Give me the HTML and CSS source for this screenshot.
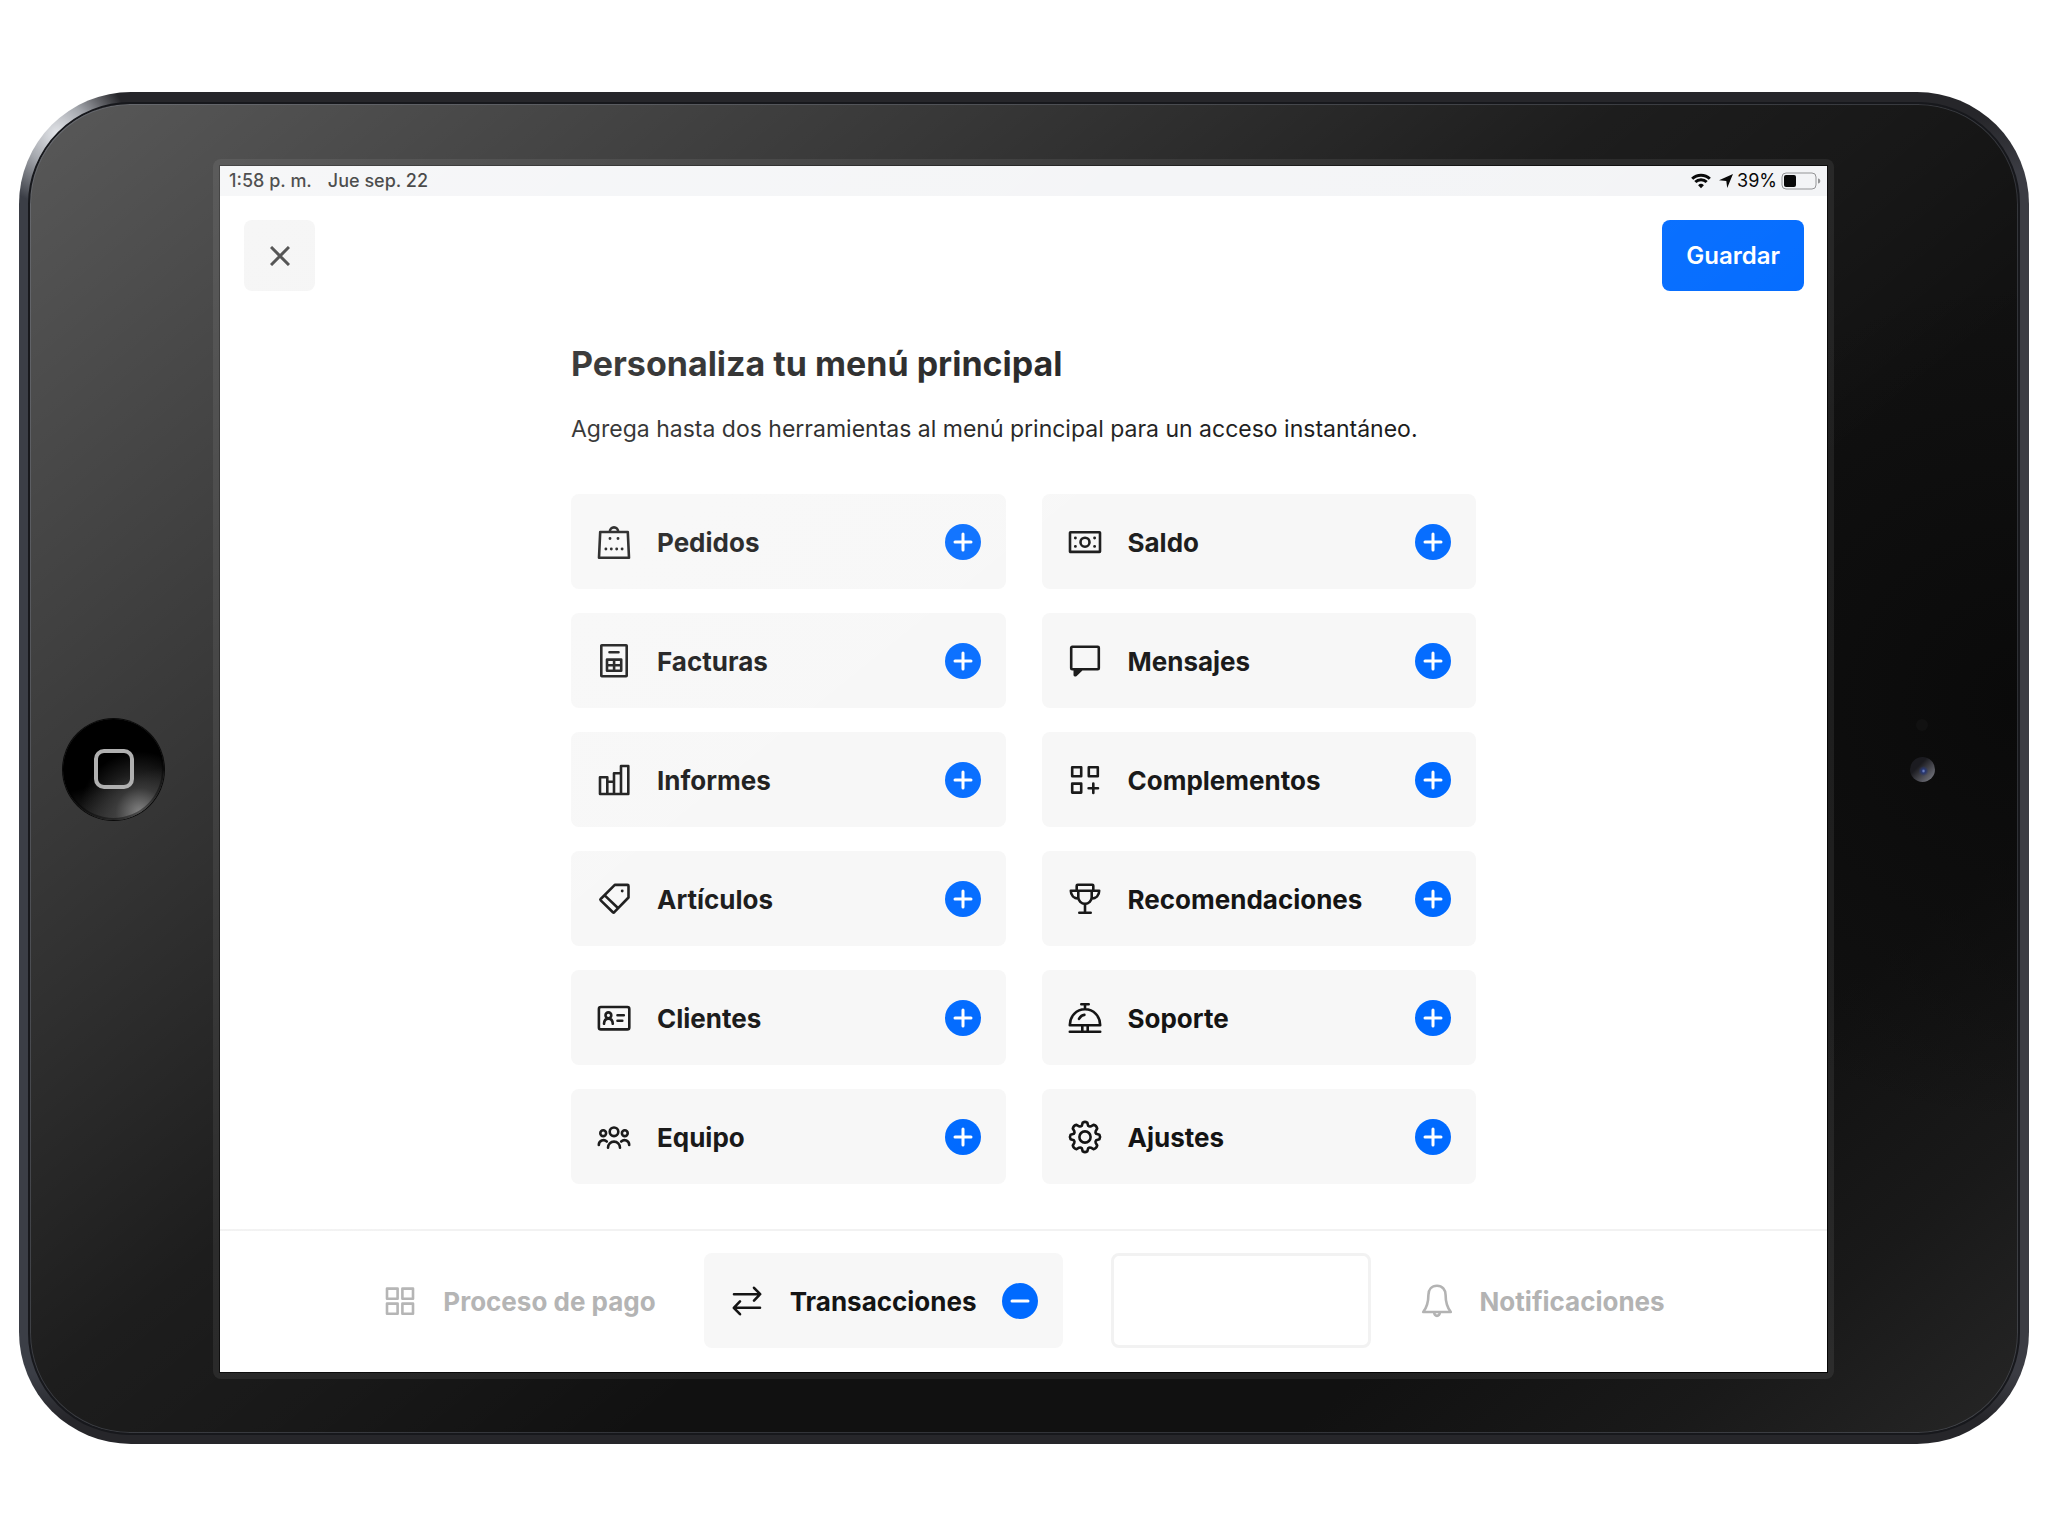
FILE: index.html
```html
<!DOCTYPE html>
<html lang="es">
<head>
<meta charset="utf-8">
<meta name="viewport" content="width=device-width, initial-scale=1">
<title>Personaliza tu menú principal</title>
<link rel="stylesheet" href="styles.css">
</head>
<body>
<svg class="sprite" aria-hidden="true">
  <symbol id="plus" viewBox="0 0 36 36"><path d="M18 10v16M10 18h16"/></symbol>
</svg>
<div class="device">
  <div class="glass">
    <div class="bezel bezel-home">
      <button class="home" type="button" aria-label="Inicio"><span class="home-mark"></span></button>
    </div>
    <div class="frame">
      <div class="screen">
        <div class="status">
          <div class="status-side status-time"><span>1:58 p. m.</span><span>Jue sep. 22</span></div>
          <div class="status-side status-power">
            <svg class="wifi" viewBox="0 0 20 16" aria-hidden="true"><path d="M1.200 5.800a12.500 12.500 0 0 1 17.600 0M4.300 9a8.100 8.100 0 0 1 11.400 0" /><path class="solid" d="M10 15.200l-2.900-2.900a4.100 4.100 0 0 1 5.800 0z"/></svg>
            <svg class="arrow" viewBox="0 0 14 14" aria-hidden="true"><path d="M14 0L8.200 14 7.300 7.100 0 6.200z"/></svg>
            <span>39%</span>
            <svg class="battery" viewBox="0 0 40 18" aria-hidden="true"><rect class="shell" x="1" y="1" width="34" height="16" rx="4"/><rect x="3" y="3" width="12" height="12" rx="2"/><path class="nub" d="M37 6.500c3 0 3 5 0 5z"/></svg>
          </div>
        </div>
        <header class="toolbar">
          <button class="close" type="button" aria-label="Cerrar"><svg viewBox="0 0 20 20" aria-hidden="true"><path d="M1 1l18 18M19 1L1 19"/></svg></button>
          <button class="save" type="button">Guardar</button>
        </header>
        <main class="content">
          <h1>Personaliza tu menú principal</h1>
          <p>Agrega hasta dos herramientas al menú principal para un acceso instantáneo.</p>
          <ul class="tools">
            <li class="tool">
              <svg class="icon" viewBox="0 0 36 36" aria-hidden="true"><path d="M4.200 8h27.600L33 33.800H3zM13.800 8a4.200 4.600 0 0 1 8.400 0"/><path class="dots" d="M14 14.500h0M22 14.500h0M9.900 25h0M15.300 25h0M20.700 25h0M26.100 25h0"/></svg>
              <span class="label">Pedidos</span>
              <button class="round" type="button" aria-label="Agregar Pedidos"><svg><use href="#plus"/></svg></button>
            </li>
            <li class="tool">
              <svg class="icon" viewBox="0 0 36 36" aria-hidden="true"><rect x="3" y="8.300" width="30" height="19.600" rx=".5"/><circle cx="18" cy="18.200" r="4.500"/><path class="dots" d="M8.400 14h0M8.400 22.400h0M27.600 14h0M27.600 22.400h0"/></svg>
              <span class="label">Saldo</span>
              <button class="round" type="button" aria-label="Agregar Saldo"><svg><use href="#plus"/></svg></button>
            </li>
            <li class="tool">
              <svg class="icon" viewBox="0 0 36 36" aria-hidden="true"><rect x="5.300" y="2.300" width="25.400" height="31" rx=".5"/><path d="M13.500 9.200h9M11 16.600h14.200v11.200H11zM11 22.200h14M18.100 16.600v11.200"/></svg>
              <span class="label">Facturas</span>
              <button class="round" type="button" aria-label="Agregar Facturas"><svg><use href="#plus"/></svg></button>
            </li>
            <li class="tool">
              <svg class="icon" viewBox="0 0 36 36" aria-hidden="true"><rect x="4.200" y="3.800" width="27.600" height="22.400" rx="1"/><path class="solid" d="M7.800 27v5.100h1L14 27z"/></svg>
              <span class="label">Mensajes</span>
              <button class="round" type="button" aria-label="Agregar Mensajes"><svg><use href="#plus"/></svg></button>
            </li>
            <li class="tool">
              <svg class="icon" viewBox="0 0 36 36" aria-hidden="true"><path d="M4 32V15.300h7.300V32M11.300 19.800H18M18 32V11.300h7M25 32V4h7.300v28H4"/></svg>
              <span class="label">Informes</span>
              <button class="round" type="button" aria-label="Agregar Informes"><svg><use href="#plus"/></svg></button>
            </li>
            <li class="tool">
              <svg class="icon" viewBox="0 0 36 36" aria-hidden="true"><path d="M5.200 5.300h9v9h-9zM21.800 5.300h9v9h-9zM5.200 21.600h9v9h-9zM26.300 21.600v9.400M21.600 26.300H31"/></svg>
              <span class="label">Complementos</span>
              <button class="round" type="button" aria-label="Agregar Complementos"><svg><use href="#plus"/></svg></button>
            </li>
            <li class="tool">
              <svg class="icon" viewBox="0 0 36 36" aria-hidden="true"><path d="M18.800 3.900H31.500a1 1 0 0 1 1 1V16.500L18.300 31.200a1 1 0 0 1-1.400 0L4.700 19.400a1 1 0 0 1 0-1.400zM8.700 14.400L22.200 27.300"/><path class="dots" d="M26.200 10h0"/></svg>
              <span class="label">Artículos</span>
              <button class="round" type="button" aria-label="Agregar Artículos"><svg><use href="#plus"/></svg></button>
            </li>
            <li class="tool">
              <svg class="icon" viewBox="0 0 36 36" aria-hidden="true"><path d="M9.700 9.800V4.800a1 1 0 0 1 1-1h14.600a1 1 0 0 1 1 1v5M3.800 9.800h28.400M11.300 9.800v6.400a6.700 6.700 0 0 0 13.400 0V9.800M3.800 9.800c0 4.500 3 7.600 7.800 8M32.200 9.800c0 4.500-3 7.600-7.800 8M18 22.900v8.800M12.300 31.800h11.400"/></svg>
              <span class="label">Recomendaciones</span>
              <button class="round" type="button" aria-label="Agregar Recomendaciones"><svg><use href="#plus"/></svg></button>
            </li>
            <li class="tool">
              <svg class="icon" viewBox="0 0 36 36" aria-hidden="true"><rect x="2.900" y="7" width="30.400" height="22.400" rx="2"/><circle cx="12.400" cy="15.300" r="2.900"/><path d="M8 23.800c.2-3.300 2-5.200 4.400-5.200s4.200 1.900 4.400 5.200M21.500 15.200h6.300M21.500 20.800h4.800"/></svg>
              <span class="label">Clientes</span>
              <button class="round" type="button" aria-label="Agregar Clientes"><svg><use href="#plus"/></svg></button>
            </li>
            <li class="tool">
              <svg class="icon" viewBox="0 0 36 36" aria-hidden="true"><path d="M14.300 4.300h7.400M18 4.300v5M2.800 25.200c0-9.200 6.700-15.900 15.200-15.900s15.200 6.700 15.200 15.900zM2.800 31.800h30.400M15.300 25.200v6.600M20.700 25.200v6.600M12 18.800c1.300-2.300 3.200-3.600 5.400-3.900"/></svg>
              <span class="label">Soporte</span>
              <button class="round" type="button" aria-label="Agregar Soporte"><svg><use href="#plus"/></svg></button>
            </li>
            <li class="tool">
              <svg class="icon" viewBox="0 0 36 36" aria-hidden="true"><circle cx="18" cy="12.800" r="4.300"/><circle cx="7.200" cy="14.200" r="2.900"/><circle cx="28.800" cy="14.200" r="2.900"/><path d="M12 28.800a6 6.200 0 0 1 12 0M2.800 26c0-4.500 5-6.200 8-3.500M33.200 26c0-4.500-5-6.200-8-3.500"/></svg>
              <span class="label">Equipo</span>
              <button class="round" type="button" aria-label="Agregar Equipo"><svg><use href="#plus"/></svg></button>
            </li>
            <li class="tool">
              <svg class="icon" viewBox="0 0 36 36" aria-hidden="true"><circle cx="18" cy="18" r="5.600"/><path d="M15.700 3.600Q18 2.200 20.300 3.600L21.200 6.800Q22.400 7.900 23.900 7.300L26.500 5.800Q29.500 6.500 30.200 9.500L28.700 12.100Q28.100 13.600 29.200 14.800L32.400 15.700Q33.800 18 32.400 20.300L29.200 21.200Q28.100 22.400 28.700 23.900L30.200 26.500Q29.500 29.500 26.500 30.200L23.900 28.700Q22.400 28.100 21.200 29.200L20.300 32.400Q18 33.800 15.700 32.400L14.800 29.200Q13.600 28.100 12.100 28.700L9.500 30.200Q6.500 29.500 5.800 26.500L7.300 23.900Q7.900 22.400 6.800 21.200L3.600 20.300Q2.200 18 3.600 15.700L6.800 14.800Q7.900 13.600 7.300 12.100L5.800 9.500Q6.500 6.500 9.500 5.800L12.100 7.300Q13.600 7.900 14.800 6.800z"/></svg>
              <span class="label">Ajustes</span>
              <button class="round" type="button" aria-label="Agregar Ajustes"><svg><use href="#plus"/></svg></button>
            </li>
          </ul>
        </main>
        <footer class="dock">
          <div class="dock-item">
            <svg class="icon" viewBox="0 0 36 36" aria-hidden="true"><path d="M5 5.600h10.600v10.200H5zM20.400 5.600H31v10.200H20.400zM5 20.600h10.600v10.200H5zM20.400 20.600H31v10.200H20.400z"/></svg>
            <span class="label">Proceso de pago</span>
          </div>
          <div class="dock-item dock-chosen">
            <svg class="icon" viewBox="0 0 36 36" aria-hidden="true"><path d="M5 11.200h26M25 4.800l6.200 6.400-6.200 6.400M31 24.800H5M11 18.400l-6.200 6.400 6.200 6.400"/></svg>
            <span class="label">Transacciones</span>
            <button class="round" type="button" aria-label="Quitar Transacciones"><svg viewBox="0 0 36 36"><path d="M10 18h16"/></svg></button>
          </div>
          <div class="dock-slot"></div>
          <div class="dock-item">
            <svg class="icon" viewBox="0 0 36 36" aria-hidden="true"><path d="M18 2.800c-5.300 0-8.600 3.800-8.600 9.200 0 7.500-1.400 12.200-5.200 17h27.600c-3.800-4.800-5.200-9.500-5.200-17 0-5.400-3.300-9.200-8.600-9.200zM15.200 29.500a2.800 3.400 0 0 0 5.600 0"/></svg>
            <span class="label">Notificaciones</span>
          </div>
        </footer>
      </div>
    </div>
    <div class="bezel bezel-camera">
      <span class="sensor"></span>
      <span class="camera"></span>
    </div>
  </div>
</div>
</body>
</html>
```
FILE: styles.css
```css
*, *::before, *::after { box-sizing: border-box; }

body {
  margin: 0;
  padding: 92px 19px;
  background: #fff;
  color: #141414;
  font-family: Inter, "Liberation Sans", sans-serif;
}

button {
  border: 0;
  padding: 0;
  font: inherit;
  cursor: pointer;
}

.sprite { display: none; }

/* Tablet shell */
.device {
  padding: 12px 11px 11px;
  border-radius: 112px;
  background:
    radial-gradient(circle at 38px 42px, #e4e6ea 0, #a5a8ae 32px, rgba(60, 62, 70, 0) 72px),
    linear-gradient(to bottom, #26262a 0, #26262a 24px, rgba(38, 38, 42, 0) 80px, rgba(38, 38, 42, 0) calc(100% - 70px), #26262a calc(100% - 24px)),
    linear-gradient(to right, #3b3e46, #3b3c43);
}

.glass {
  position: relative;
  display: grid;
  grid-template-columns: 183px 1fr 184px;
  padding: 55px 0 54px;
  border-radius: 100px;
  overflow: hidden;
  background:
    radial-gradient(circle at 100% 45%, #0a0a0a 0, rgba(10, 10, 10, 0) 420px),
    linear-gradient(141deg, #111 0, #111 80%, #191919 90%, #262626 100%);
  outline: 2px solid #17181c;
}

/* Diagonal light across the glass and the display */
.glass::after {
  content: "";
  position: absolute;
  inset: 0;
  border-radius: 100px;
  pointer-events: none;
  background: linear-gradient(141deg, rgba(255, 255, 255, .3) 0, rgba(255, 255, 255, .16) 26%, rgba(255, 255, 255, .05) 44%, rgba(255, 255, 255, .03) 52%, rgba(255, 255, 255, 0) 62%);
  box-shadow: inset 0 0 0 1px rgba(150, 160, 180, .25);
}

.bezel {
  display: flex;
  flex-direction: column;
  align-items: center;
  justify-content: center;
}

.bezel-home { padding-right: 16px; }
.bezel-camera { padding: 0 8px 38px 0; gap: 26px; }

.home {
  position: relative;
  z-index: 1;
  display: grid;
  place-items: center;
  width: 101px;
  height: 101px;
  border-radius: 50%;
  background:
    radial-gradient(circle at 76% 92%, rgba(140, 140, 140, .9) 0, rgba(80, 80, 80, .6) 20%, rgba(0, 0, 0, 0) 50%),
    linear-gradient(165deg, #000 0, #000 58%, #383838 100%);
  box-shadow: 0 0 0 1px #0a0a0a, inset 0 0 0 2px rgba(0, 0, 0, .4);
}

.home-mark {
  width: 40px;
  height: 40px;
  border: 4px solid #b0b0b0;
  border-radius: 10px;
}

.sensor {
  width: 12px;
  height: 12px;
  border-radius: 50%;
  background: #111;
}

.camera {
  width: 25px;
  height: 25px;
  border-radius: 50%;
  background:
    radial-gradient(circle at 54% 56%, #7d93d6 0, #27366f 2px, rgba(30, 36, 60, 0) 5px),
    linear-gradient(135deg, #1b1b20 35%, #7c7d86 95%);
}

.frame {
  padding: 7px;
  border-radius: 8px;
  background: rgba(255, 255, 255, .07);
}

/* Display */
.screen {
  display: flex;
  flex-direction: column;
  background: #fff;
  outline: 1px solid #050505;
}

.status {
  display: flex;
  justify-content: space-between;
  align-items: center;
  height: 30px;
  padding: 0 6px 0 9px;
  background: #f3f4f6;
  font-size: 18px;
  line-height: 30px;
}

.status-side { display: flex; align-items: center; }
.status-time { gap: 16px; font-weight: 500; }
.status-power { gap: 4px; color: #000; }

.wifi { width: 20px; height: 16px; margin-right: 4px; fill: none; stroke: #000; stroke-width: 3; }
.wifi .solid { fill: #000; stroke: none; }
.arrow { width: 14px; height: 14px; }
.battery { width: 40px; height: 18px; }
.battery .shell { fill: none; stroke: #8f9092; stroke-width: 1; }
.battery .nub { fill: #8f9092; }

.toolbar {
  display: flex;
  justify-content: space-between;
  padding: 24px 23px 0 24px;
}

.close, .save { height: 71px; border-radius: 8px; }

.close {
  display: grid;
  place-items: center;
  width: 71px;
  background: #f3f3f3;
}

.close svg {
  width: 20px;
  height: 20px;
  stroke: #222;
  stroke-width: 3;
}

.save {
  padding: 0 24px;
  background: #006aff;
  color: #fff;
  font-size: 24px;
  font-weight: 600;
}

.content {
  width: 100%;
  max-width: 953px;
  margin: 0 auto;
  padding: 49px 24px 45px;
}

h1 {
  margin: 0 0 23px;
  font-size: 34px;
  font-weight: 700;
  line-height: 48px;
}

p {
  margin: 0 0 47px;
  font-size: 23px;
  line-height: 36px;
}

.tools {
  display: grid;
  grid-template-columns: 1fr 1fr;
  gap: 24px 36px;
  margin: 0;
  padding: 0;
  list-style: none;
}

.tool, .dock-item {
  display: flex;
  align-items: center;
  gap: 25px;
  height: 95px;
}

.tool, .dock-chosen {
  padding: 0 25px;
  border-radius: 8px;
  background: #f7f7f7;
}

.label {
  padding-top: 2px;
  font-size: 26px;
  font-weight: 700;
  line-height: 36px;
}

.tool .label { flex: 1; }

.icon {
  flex: none;
  width: 36px;
  height: 36px;
  fill: none;
  stroke: currentColor;
  stroke-width: 2.600;
  stroke-linecap: round;
  stroke-linejoin: round;
}

.icon .dots { stroke-width: 2.900; }
.icon .solid { fill: currentColor; }

.round {
  flex: none;
  width: 36px;
  height: 36px;
  border-radius: 50%;
  background: #006aff;
}

.round svg {
  display: block;
  width: 36px;
  height: 36px;
  fill: none;
  stroke: #fff;
  stroke-width: 3;
  stroke-linecap: round;
}

.dock {
  display: flex;
  justify-content: center;
  gap: 48px;
  padding: 22px 24px 24px;
  border-top: 2px solid #f2f2f2;
}

.dock-item { color: #b3b3b3; }
.dock-chosen { color: #141414; }

.dock-slot {
  width: 260px;
  border: 3px solid #f2f2f2;
  border-radius: 8px;
}
```
